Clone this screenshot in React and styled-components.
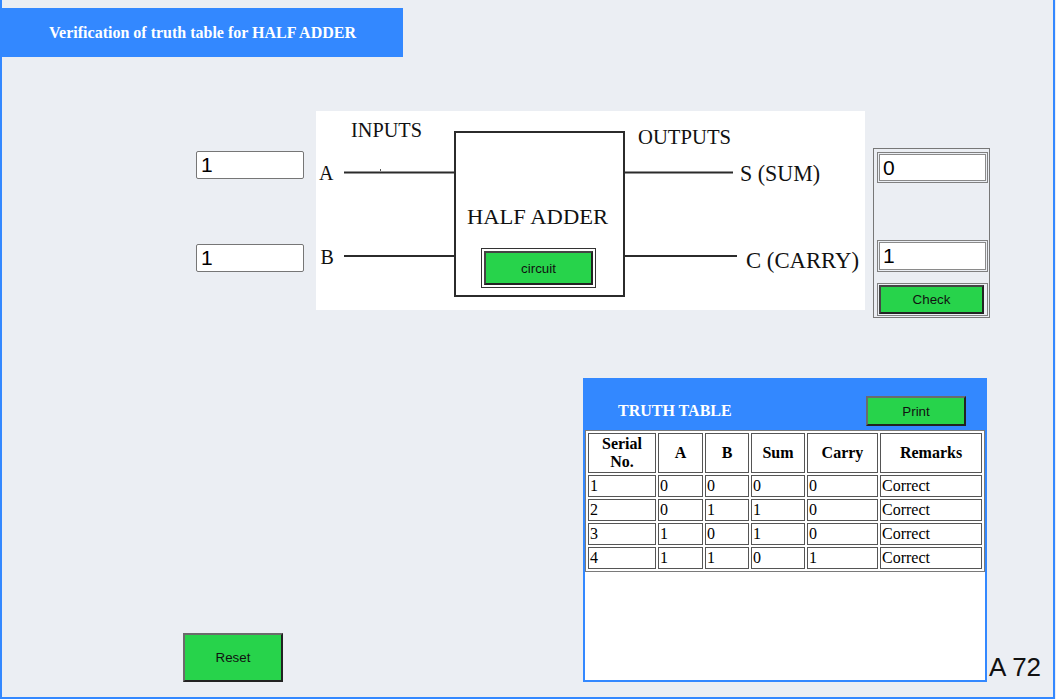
import React from 'react';
import styled, { createGlobalStyle } from 'styled-components';

const BLUE = '#3388ff';
const GREEN = '#27d34b';
const BG = '#ebeef3';

const Global = createGlobalStyle`
  html, body { margin: 0; padding: 0; background: ${BG}; }
  body { font-family: "Liberation Serif", "Times New Roman", serif; }
`;

const Frame = styled.div`
  box-sizing: border-box;
  width: 1055px;
  height: 699px;
  background: ${BG};
  border-left: 2px solid ${BLUE};
  border-right: 2px solid ${BLUE};
  border-bottom: 2px solid ${BLUE};
  display: flex;
  flex-direction: column;
  overflow: hidden;
`;

const TitleBar = styled.div`
  margin-top: 8px;
  width: 401px;
  height: 49px;
  background: ${BLUE};
  color: #fff;
  font-weight: bold;
  font-size: 16px;
  display: flex;
  align-items: center;
  justify-content: center;
`;

const DiagramRow = styled.div`
  display: flex;
  align-items: flex-start;
  margin-top: 54px;
`;

const InputColumn = styled.div`
  margin-left: 194px;
  padding-top: 40px;
  display: flex;
  flex-direction: column;
  gap: 65px;
`;

const TextBox = styled.input`
  box-sizing: border-box;
  width: 108px;
  height: 28px;
  margin: 0;
  border: 1px solid #767676;
  border-radius: 2px;
  background: #fff;
  color: #000;
  font-family: "Liberation Sans", Arial, sans-serif;
  font-size: 21px;
  padding: 0 4px;
  outline: none;
`;

const Diagram = styled.div`
  position: relative;
  margin-left: 12px;
  width: 549px;
  height: 199px;
  background: #fff;
  flex-shrink: 0;
`;

const CircuitFrame = styled.div`
  position: absolute;
  left: 165px;
  top: 137px;
  box-sizing: border-box;
  width: 115px;
  height: 40px;
  border: 1px solid #333;
  padding: 2px;
  background: #fff;
  display: flex;
`;

const GreenButton = styled.button`
  box-sizing: border-box;
  width: ${p => p.$w}px;
  height: ${p => p.$h}px;
  margin: 0;
  padding: 0;
  background: ${GREEN};
  border-style: solid;
  border-width: 2px;
  border-color: ${p => (p.$dark ? '#444 #222 #222 #444' : '#6b6b6b #222 #222 #6b6b6b')};
  color: #111;
  font-family: "Liberation Sans", Arial, sans-serif;
  font-size: 13.33px;
  cursor: pointer;
  flex-shrink: 0;
`;

const OutputPanel = styled.div`
  box-sizing: border-box;
  margin-left: 8px;
  margin-top: 37px;
  width: 117px;
  border: 1px solid #777;
  padding: 3px 1px 1px 3px;
  display: flex;
  flex-direction: column;
`;

const OutCell = styled.div`
  box-sizing: border-box;
  width: 111px;
  border: 1px solid #808080;
  padding: 1px;
  margin-top: ${p => p.$gap || 0}px;
  display: flex;
`;

const OutBox = styled(TextBox)`
  width: 100%;
  height: ${p => p.$h}px;
  border: 1px solid #8a8a8a;
  border-radius: 0;
  padding: 0 3px;
`;

const BottomRow = styled.div`
  display: flex;
  align-items: flex-end;
  margin-top: 60px;
`;

const ResetWrap = styled.div`
  margin-left: 181px;
  display: flex;
`;

const TruthPanel = styled.div`
  box-sizing: border-box;
  margin-left: 300px;
  width: 404px;
  height: 304px;
  border: 2px solid ${BLUE};
  background: #fff;
  display: flex;
  flex-direction: column;
`;

const TruthHeader = styled.div`
  box-sizing: border-box;
  height: 50px;
  background: ${BLUE};
  padding: 16px 19px 4px 33px;
  display: flex;
  align-items: center;
  justify-content: space-between;
`;

const TruthTitle = styled.span`
  color: #fff;
  font-weight: bold;
  font-size: 16px;
`;

const Table = styled.table`
  width: 400px;
  table-layout: fixed;
  border-collapse: separate;
  border-spacing: 2px;
  border: 1px solid #7a7a7a;
  font-size: 16px;
  line-height: 18px;
`;

const Th = styled.th`
  box-sizing: border-box;
  width: ${p => p.$w}px;
  border: 1px solid #555;
  padding: 1px;
  font-weight: bold;
  text-align: center;
  vertical-align: middle;
  color: #000;
`;

const Td = styled.td`
  box-sizing: border-box;
  border: 1px solid #555;
  padding: 1px;
  text-align: left;
  color: #000;
  height: 22px;
  white-space: nowrap;
`;

const Tag = styled.div`
  margin-left: 2px;
  font-family: "Liberation Sans", Arial, sans-serif;
  font-size: 26px;
  line-height: 30px;
  color: #111;
  white-space: nowrap;
`;

const cols = [
  { label: <>Serial<br />No.</>, w: 68 },
  { label: 'A', w: 45 },
  { label: 'B', w: 44 },
  { label: 'Sum', w: 54 },
  { label: 'Carry', w: 71 },
  { label: 'Remarks', w: 102 },
];

const rows = [
  ['1', '0', '0', '0', '0', 'Correct'],
  ['2', '0', '1', '1', '0', 'Correct'],
  ['3', '1', '0', '1', '0', 'Correct'],
  ['4', '1', '1', '0', '1', 'Correct'],
];

const serif = { fontFamily: '"Liberation Serif", "Times New Roman", serif' };

function CircuitDrawing() {
  return (
    <svg width="549" height="199" viewBox="0 0 549 199" style={{ display: 'block' }}>
      <g stroke="#2b2b2b" strokeWidth="2" fill="none">
        <line x1="28" y1="61.5" x2="139" y2="61.5" />
        <line x1="28" y1="145" x2="139" y2="145" />
        <rect x="139" y="21" width="169" height="164" />
        <line x1="308" y1="61.5" x2="417" y2="61.5" />
        <line x1="308" y1="145" x2="421" y2="145" />
      </g>
      <rect x="64" y="58" width="1" height="2" fill="#555" />
      <g fill="#111" style={serif}>
        <text x="35" y="26" fontSize="20" textLength="71" lengthAdjust="spacingAndGlyphs">INPUTS</text>
        <text x="3" y="69" fontSize="20">A</text>
        <text x="4.5" y="153" fontSize="20">B</text>
        <text x="151" y="113" fontSize="22" textLength="141" lengthAdjust="spacingAndGlyphs">HALF ADDER</text>
        <text x="322" y="33" fontSize="21" textLength="93" lengthAdjust="spacingAndGlyphs">OUTPUTS</text>
        <text x="424" y="70" fontSize="23" textLength="80" lengthAdjust="spacingAndGlyphs">S (SUM)</text>
        <text x="430" y="157" fontSize="23" textLength="113" lengthAdjust="spacingAndGlyphs">C (CARRY)</text>
      </g>
    </svg>
  );
}

export default function App() {
  return (
    <>
      <Global />
      <Frame>
        <TitleBar>Verification of truth table for HALF ADDER</TitleBar>

        <DiagramRow>
          <InputColumn>
            <TextBox defaultValue="1" />
            <TextBox defaultValue="1" />
          </InputColumn>

          <Diagram>
            <CircuitDrawing />
            <CircuitFrame>
              <GreenButton $w={109} $h={34} $dark>circuit</GreenButton>
            </CircuitFrame>
          </Diagram>

          <OutputPanel>
            <OutCell>
              <OutBox defaultValue="0" $h={27} />
            </OutCell>
            <OutCell $gap={57}>
              <OutBox defaultValue="1" $h={28} />
            </OutCell>
            <OutCell $gap={11}>
              <GreenButton $w={105} $h={29} $dark>Check</GreenButton>
            </OutCell>
          </OutputPanel>
        </DiagramRow>

        <BottomRow>
          <ResetWrap>
            <GreenButton $w={100} $h={49}>Reset</GreenButton>
          </ResetWrap>

          <TruthPanel>
            <TruthHeader>
              <TruthTitle>TRUTH TABLE</TruthTitle>
              <GreenButton $w={100} $h={30}>Print</GreenButton>
            </TruthHeader>
            <Table>
              <thead>
                <tr>
                  {cols.map((c, i) => (
                    <Th key={i} $w={c.w}>{c.label}</Th>
                  ))}
                </tr>
              </thead>
              <tbody>
                {rows.map((r, i) => (
                  <tr key={i}>
                    {r.map((v, j) => (
                      <Td key={j}>{v}</Td>
                    ))}
                  </tr>
                ))}
              </tbody>
            </Table>
          </TruthPanel>

          <Tag>A 72</Tag>
        </BottomRow>
      </Frame>
    </>
  );
}
